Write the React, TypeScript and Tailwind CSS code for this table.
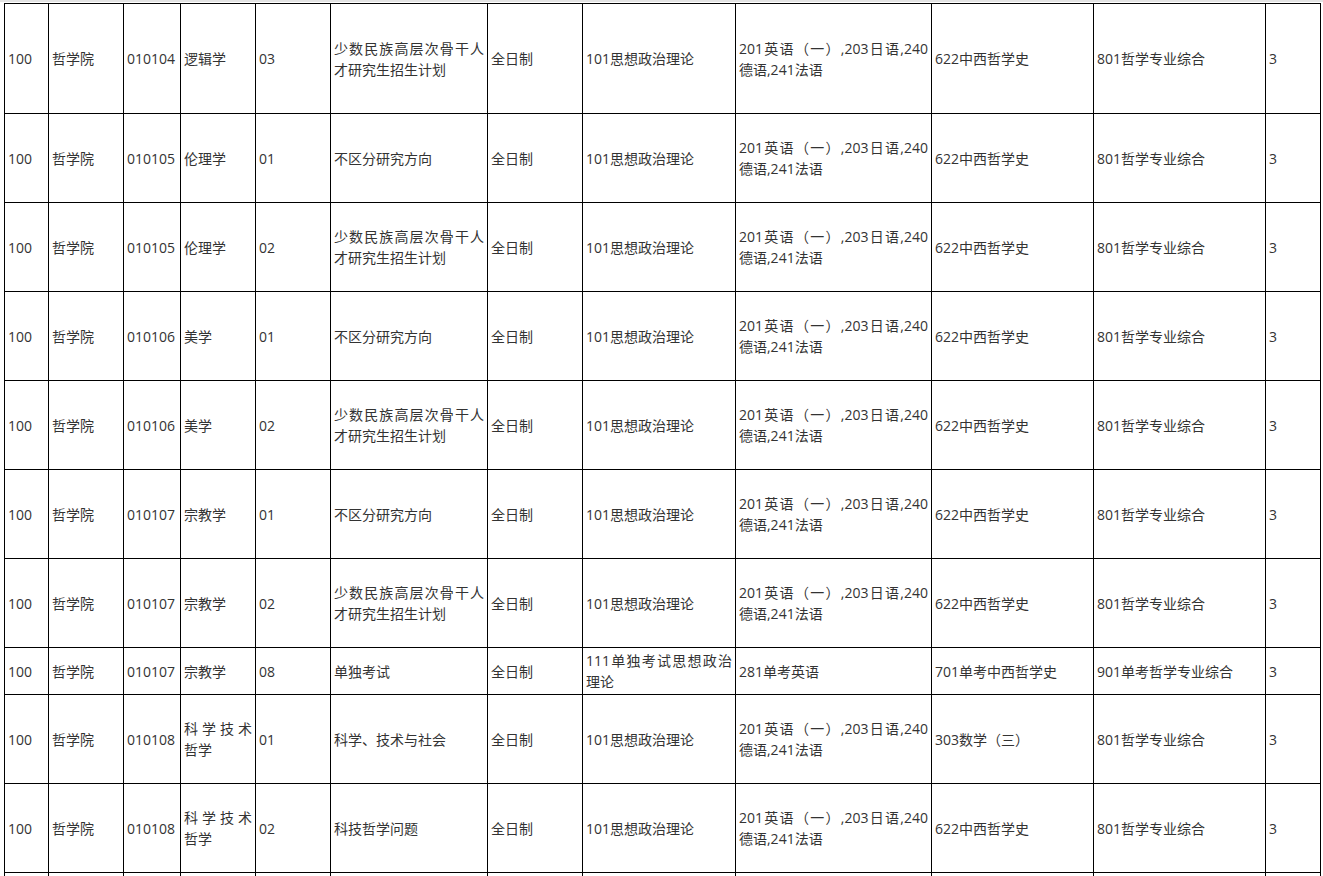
const cols = [44, 75, 57, 75, 75, 157, 95, 153, 196, 162, 172, 55];

const FL = "201英语（一）,203日语,240德语,241法语";
const SHAO = "少数民族高层次骨干人才研究生招生计划";
const BU = "不区分研究方向";

interface Row {
  h: number;
  cells: string[];
}

const rows: Row[] = [
  { h: 110, cells: ["100", "哲学院", "010104", "逻辑学", "03", SHAO, "全日制", "101思想政治理论", FL, "622中西哲学史", "801哲学专业综合", "3"] },
  { h: 89, cells: ["100", "哲学院", "010105", "伦理学", "01", BU, "全日制", "101思想政治理论", FL, "622中西哲学史", "801哲学专业综合", "3"] },
  { h: 89, cells: ["100", "哲学院", "010105", "伦理学", "02", SHAO, "全日制", "101思想政治理论", FL, "622中西哲学史", "801哲学专业综合", "3"] },
  { h: 89, cells: ["100", "哲学院", "010106", "美学", "01", BU, "全日制", "101思想政治理论", FL, "622中西哲学史", "801哲学专业综合", "3"] },
  { h: 89, cells: ["100", "哲学院", "010106", "美学", "02", SHAO, "全日制", "101思想政治理论", FL, "622中西哲学史", "801哲学专业综合", "3"] },
  { h: 89, cells: ["100", "哲学院", "010107", "宗教学", "01", BU, "全日制", "101思想政治理论", FL, "622中西哲学史", "801哲学专业综合", "3"] },
  { h: 89, cells: ["100", "哲学院", "010107", "宗教学", "02", SHAO, "全日制", "101思想政治理论", FL, "622中西哲学史", "801哲学专业综合", "3"] },
  { h: 47, cells: ["100", "哲学院", "010107", "宗教学", "08", "单独考试", "全日制", "111单独考试思想政治理论", "281单考英语", "701单考中西哲学史", "901单考哲学专业综合", "3"] },
  { h: 89, cells: ["100", "哲学院", "010108", "科学技术哲学", "01", "科学、技术与社会", "全日制", "101思想政治理论", FL, "303数学（三）", "801哲学专业综合", "3"] },
  { h: 89, cells: ["100", "哲学院", "010108", "科学技术哲学", "02", "科技哲学问题", "全日制", "101思想政治理论", FL, "622中西哲学史", "801哲学专业综合", "3"] },
  // next row only shows its top edge in the frame
  { h: 89, cells: ["", "", "", "", "", "", "", "", "", "", "", ""] },
];

export default function App() {
  return (
    <div className="bg-white min-h-screen font-['Open_Sans','Noto_Sans_CJK_SC',sans-serif] text-[14px] leading-[21px] text-[#333333]">
      <div className="h-[2px] bg-[#e3e3e3]" />
      <div
        className="mt-[1px] ml-[4px] grid w-max border-l border-t border-black"
        style={{ gridTemplateColumns: cols.map((c) => `${c}px`).join(" ") }}
      >
        {rows.map((row, ri) =>
          row.cells.map((cell, ci) => (
            <div
              key={`${ri}-${ci}`}
              className="flex items-center border-r border-b border-black px-[3px]"
              style={{ height: row.h }}
            >
              <div className="w-full text-justify break-all">{cell}</div>
            </div>
          ))
        )}
      </div>
    </div>
  );
}
